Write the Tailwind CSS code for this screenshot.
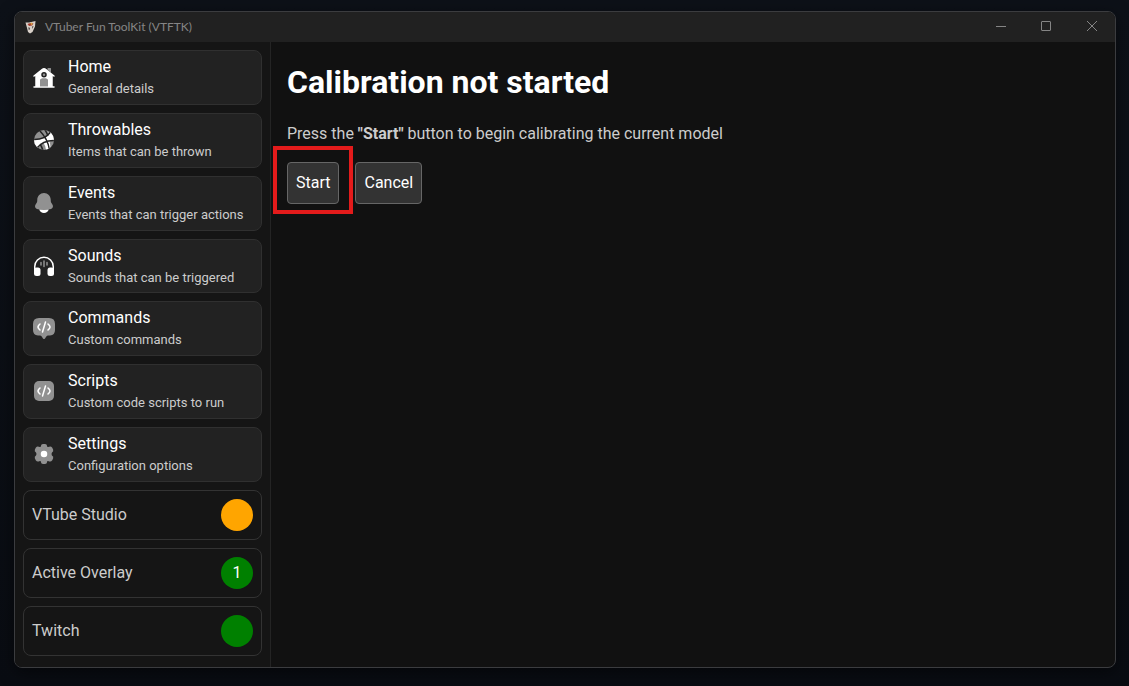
<!DOCTYPE html>
<html lang="en">
<head>
<meta charset="utf-8">
<meta name="viewport" content="width=device-width, initial-scale=1">
<title>VTuber Fun ToolKit (VTFTK)</title>
<script src="https://cdn.jsdelivr.net/npm/@tailwindcss/browser@4"></script>
</head>
<body class="min-h-screen bg-linear-to-b from-[#0d1118] to-[#090c12] font-[Roboto,sans-serif] text-base text-[#ccc]">
<div class="flex min-h-screen flex-col pt-[11px] pr-[13px] pb-[18px] pl-[14px]">
  <div class="flex grow flex-col overflow-hidden rounded-lg border border-[#3b3c3f] bg-[#111] shadow-[0_4px_16px_rgba(0,0,0,0.5)]">
    <header class="flex h-[30px] shrink-0 items-center bg-[#212121] pl-2 text-[#858585]">
      <svg class="size-4" viewBox="0 0 16 16" aria-hidden="true">
        <path d="M2.500 3.500 6 3.500 12.500 2 12 7.500 9.500 13 7 14.500 5 13 4 9z" fill="#d8d0c8"/>
        <path d="m4.500 5 3-1 3 .5-1.500 2-3 .5z" fill="#a33a2c"/>
        <path d="m7.500 4 1.500-.5.5 2-1.500.5z" fill="#d9a441"/>
        <path d="m5.500 8 1.500 1-.5 2-1-.5zM9 7.500l1.500-.5-1 3z" fill="#4b4542"/>
      </svg>
      <h2 class="ml-[6px] grow font-[Lato,sans-serif] text-xs">VTuber Fun ToolKit (VTFTK)</h2>
      <div class="flex h-full">
        <button type="button" aria-label="Minimize" class="grid w-11 place-items-center"><svg class="size-3" viewBox="0 0 12 12" fill="none" stroke="currentColor"><path d="M1 5.500h10"/></svg></button>
        <button type="button" aria-label="Maximize" class="grid w-[46px] place-items-center"><svg class="size-3" viewBox="0 0 12 12" fill="none" stroke="currentColor"><rect x="1.500" y=".5" width="9" height="9" rx=".5"/></svg></button>
        <button type="button" aria-label="Close" class="grid w-[46px] place-items-center"><svg class="size-3" viewBox="0 0 12 12" fill="none" stroke="currentColor"><path d="m1 0 10 10m0-10L1 10"/></svg></button>
      </div>
    </header>
    <div class="flex grow">
      <aside class="flex w-64 shrink-0 flex-col gap-2 border-r border-[#242424] bg-[#151515] px-2 pt-2 pb-[11px]">
        <nav class="flex grow flex-col gap-2" aria-label="Main">
          <a href="#home" class="flex flex-1 items-center gap-3 rounded-lg border border-[#303030] bg-[#222] px-2 pb-px">
            <svg class="size-6 text-white" viewBox="0 0 24 24" fill="currentColor" aria-hidden="true">
              <path opacity=".5" d="M18.500 3H16a.5.5 0 0 0-.5.5v1.300L19 7.600V3.500a.5.5 0 0 0-.5-.5M10.500 13.500h3a2.500 2.500 0 0 1 2.500 2.500v5.250H8V16a2.500 2.500 0 0 1 2.500-2.500M12 8.500a1.250 1.250 0 1 1 0 2.500 1.250 1.250 0 0 1 0-2.500"/>
              <path fill-rule="evenodd" d="m20.750 10.960.782.626a.75.75 0 0 0 .936-1.172l-8.125-6.500a3.750 3.750 0 0 0-4.686 0l-8.125 6.500a.75.75 0 0 0 .937 1.172l.781-.626v10.290H2a.75.75 0 0 0 0 1.500h20a.75.75 0 0 0 0-1.500h-1.250zM9.250 9.750a2.750 2.750 0 1 1 5.500 0 2.750 2.750 0 0 1-5.500 0M8 21.250V16a2.500 2.500 0 0 1 2.500-2.500h3A2.500 2.500 0 0 1 16 16v5.250z"/>
            </svg>
            <span class="flex flex-col"><span class="leading-6 text-white">Home</span><span class="text-[13px] leading-5">General details</span></span>
          </a>
          <a href="#throwables" class="flex flex-1 items-center gap-3 rounded-lg border border-[#303030] bg-[#222] px-2 pb-px">
            <svg class="size-6 text-white" viewBox="0 0 24 24" aria-hidden="true">
              <clipPath id="ball"><circle cx="12" cy="12" r="10"/></clipPath>
              <g clip-path="url(#ball)">
                <path d="M0 0h24v24H0z" fill="#909090"/>
                <path d="M0 11Q8 12 14 9.500L18 2l6 4v7q-3-.5-6.500.5Q19 18 18 23h-4q0-5-2.500-8Q7 17 5 21l-6-4z" fill="#fff"/>
                <path d="M1 11.500Q13 12 18.500 4M4.500 20.500Q11 12 23 12.500M7.500 2.500Q16 11 17.500 22M12.500 1q2 3 3.500 7M8 16q2 3 3 7" fill="none" stroke="#222" stroke-width="1.500"/>
              </g>
            </svg>
            <span class="flex flex-col"><span class="leading-6 text-white">Throwables</span><span class="text-[13px] leading-5">Items that can be thrown</span></span>
          </a>
          <a href="#events" class="flex flex-1 items-center gap-3 rounded-lg border border-[#303030] bg-[#222] px-2 pb-px">
            <svg class="size-6 text-white" viewBox="0 0 24 24" fill="currentColor" aria-hidden="true">
              <path opacity=".5" d="M18.750 9v.704c0 .845.24 1.671.692 2.374l1.108 1.723c1.011 1.574.239 3.713-1.520 4.210a25.800 25.800 0 0 1-14.060 0c-1.759-.497-2.531-2.636-1.520-4.210l1.108-1.723a4.400 4.400 0 0 0 .693-2.374V9c0-3.866 3.022-7 6.749-7s6.750 3.134 6.750 7"/>
              <path d="M7.243 18.545a5.002 5.002 0 0 0 9.513 0c-3.145.59-6.367.59-9.513 0"/>
            </svg>
            <span class="flex flex-col"><span class="leading-6 text-white">Events</span><span class="text-[13px] leading-5">Events that can trigger actions</span></span>
          </a>
          <a href="#sounds" class="flex flex-1 items-center gap-3 rounded-lg border border-[#303030] bg-[#222] px-2 pb-px">
            <svg class="size-6 text-white" viewBox="0 0 24 24" fill="currentColor" aria-hidden="true">
              <path d="M2.750 18v-5.500a9.250 9.250 0 0 1 18.500 0V18" fill="none" stroke="currentColor" stroke-width="1.500"/>
              <rect x="2" y="13.500" width="6.500" height="8.500" rx="2.500"/><rect x="15.500" y="13.500" width="6.500" height="8.500" rx="2.500"/>
              <path opacity=".5" d="M12 7v5.500M9 8.500v2.500M15 8.500v2.500" fill="none" stroke="currentColor" stroke-width="1.500" stroke-linecap="round"/>
            </svg>
            <span class="flex flex-col"><span class="leading-6 text-white">Sounds</span><span class="text-[13px] leading-5">Sounds that can be triggered</span></span>
          </a>
          <a href="#commands" class="flex flex-1 items-center gap-3 rounded-lg border border-[#303030] bg-[#222] px-2 pb-px">
            <svg class="size-6 text-white" viewBox="0 0 24 24" fill="none" aria-hidden="true">
              <path opacity=".5" fill="currentColor" d="M7 2h10q6 0 6 6v6q0 5-5 5.500h-2q-1 .2-1.700 1l-1.300 2q-1 1.200-2 0l-1.300-2q-.7-.8-1.700-1H6Q1 19 1 14V8q0-6 6-6"/>
              <path stroke="currentColor" stroke-width="1.500" stroke-linecap="round" d="m13.500 6-3 10M16 8l1 1q2 2 0 4l-1 1M8 8 7 9q-2 2 0 4l1 1"/>
            </svg>
            <span class="flex flex-col"><span class="leading-6 text-white">Commands</span><span class="text-[13px] leading-5">Custom commands</span></span>
          </a>
          <a href="#scripts" class="flex flex-1 items-center gap-3 rounded-lg border border-[#303030] bg-[#222] px-2 pb-px">
            <svg class="size-6 text-white" viewBox="0 0 24 24" fill="none" aria-hidden="true">
              <rect opacity=".5" fill="currentColor" x="2" y="2" width="20" height="20" rx="5"/>
              <path stroke="currentColor" stroke-width="1.500" stroke-linecap="round" d="m13.500 7-3 10M16 9l1 1q2 2 0 4l-1 1M8 9l-1 1q-2 2 0 4l1 1"/>
            </svg>
            <span class="flex flex-col"><span class="leading-6 text-white">Scripts</span><span class="text-[13px] leading-5">Custom code scripts to run</span></span>
          </a>
          <a href="#settings" class="flex flex-1 items-center gap-3 rounded-lg border border-[#303030] bg-[#222] px-2 pb-px">
            <svg class="size-6 text-white" viewBox="0 0 24 24" fill="currentColor" aria-hidden="true">
              <path fill="#909090" stroke="#909090" stroke-width="2" stroke-linejoin="round" d="M11 3h2q1 0 1.200 1.500.3 2 2.300 1.500 2-1 2.700 0l1 2q.5 1-1 2-1.500 2 0 4 1.500 1 1 2l-1 2q-.7 1-2.700 0-2-.5-2.300 1.500Q14 21 13 21h-2q-1 0-1.200-1.500Q9.500 17.500 7.500 18q-2 1-2.700 0l-1-2q-.5-1 1-2 1.500-2 0-4-1.500-1-1-2l1-2q.7-1 2.700 0 2 .5 2.300-1.500Q10 3 11 3z"/>
              <circle cx="12" cy="12" r="3.250"/>
            </svg>
            <span class="flex flex-col"><span class="leading-6 text-white">Settings</span><span class="text-[13px] leading-5">Configuration options</span></span>
          </a>
        </nav>
        <ul class="flex flex-col gap-2">
          <li class="flex h-[50px] items-center justify-between rounded-lg border border-[#333] px-2">VTube Studio<span class="size-8 rounded-full bg-[#ffa500]"></span></li>
          <li class="flex h-[50px] items-center justify-between rounded-lg border border-[#333] px-2">Active Overlay<span class="grid size-8 place-items-center rounded-full bg-[#008000] text-white">1</span></li>
          <li class="flex h-[50px] items-center justify-between rounded-lg border border-[#333] px-2">Twitch<span class="size-8 rounded-full bg-[#008000]"></span></li>
        </ul>
      </aside>
      <main class="grow p-4">
        <h1 class="mt-1 text-[32px] leading-10 font-bold text-white">Calibration not started</h1>
        <p class="mt-5 leading-6">Press the <strong>"Start"</strong> button to begin calibrating the current model</p>
        <div class="mt-4 flex gap-4">
          <div class="relative">
            <button type="button" class="h-[42px] rounded-sm border border-[#666] bg-[#333] px-2 text-white">Start</button>
            <span class="pointer-events-none absolute -inset-x-[14px] -top-4 -bottom-[10px] border-4 border-[#e41b1b]"></span>
          </div>
          <button type="button" class="h-[42px] rounded-sm border border-[#666] bg-[#333] px-2 text-white">Cancel</button>
        </div>
      </main>
    </div>
  </div>
</div>
</body>
</html>
